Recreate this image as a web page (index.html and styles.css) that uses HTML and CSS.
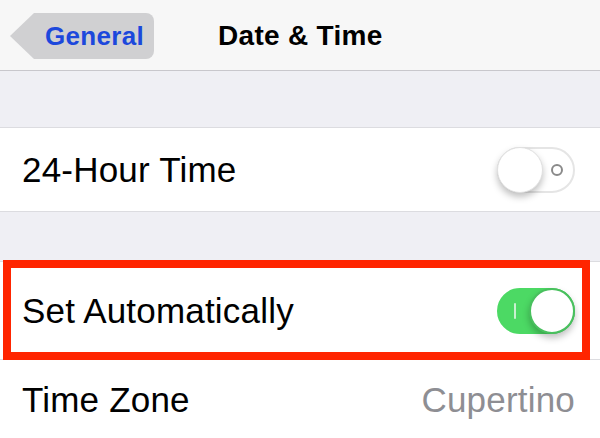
FILE: index.html
```html
<!DOCTYPE html>
<html lang="en">
<head>
  <meta charset="UTF-8">
  <meta name="viewport" content="width=device-width, initial-scale=1.0">
  <title>Date &amp; Time</title>
  <link rel="stylesheet" href="styles.css">
</head>
<body>
  <div class="nav">
    <div class="back">
      <span class="back-label">General</span>
    </div>
    <div class="nav-title">Date &amp; Time</div>
  </div>

  <div class="gap gap-first"></div>

  <div class="row">
    <span class="label">24-Hour Time</span>
    <div class="switch">
      <span class="switch-mark"></span>
      <span class="knob"></span>
    </div>
  </div>

  <div class="gap"></div>

  <div class="row row-marked">
    <span class="label">Set Automatically</span>
    <div class="switch on">
      <span class="switch-mark"></span>
      <span class="knob"></span>
    </div>
  </div>

  <div class="row row-last">
    <span class="label">Time Zone</span>
    <span class="value">Cupertino</span>
  </div>
</body>
</html>
```

FILE: styles.css
```css
body {
  margin: 0;
  font-family: "Liberation Sans", Arial, sans-serif;
  background: #efeff4;
  color: #000;
  overflow: hidden;
}

.nav {
  height: 70px;
  display: flex;
  align-items: center;
  background: #f7f7f7;
  border-bottom: 1px solid #c8c7cc;
  padding-top: 2px;
  box-sizing: border-box;
  height: 71px;
}
.back {
  position: relative;
  margin-left: 34px;
  height: 46px;
  width: 120px;
  background: #d0d0d2;
  border-radius: 0 8px 8px 0;
  display: flex;
  align-items: center;
}
/* pointed tip on the left of the back button */
.back::before {
  content: "";
  position: absolute;
  left: -24px;
  top: 0;
  border-top: 23px solid transparent;
  border-bottom: 23px solid transparent;
  border-right: 24px solid #d0d0d2;
}
.back-label {
  margin-left: 11px;
  font-size: 26px;
  font-weight: bold;
  color: #1c48dc;
  letter-spacing: 0.3px;
}
.nav-title {
  margin-left: 64px;
  font-size: 28px;
  font-weight: bold;
  letter-spacing: 0.3px;
}

.gap {
  height: 49px;
  border-bottom: 1px solid #dcdce0;
}
.gap-first {
  height: 56px;
}

.row {
  position: relative;
  height: 83px;
  display: flex;
  align-items: center;
  justify-content: space-between;
  padding: 0 25px 0 22px;
  background: #fff;
  border-bottom: 1px solid #dcdce0;
}
.row-marked {
  height: 97px;
}
/* red highlight frame drawn over the row */
.row-marked::after {
  content: "";
  position: absolute;
  left: 3px;
  right: 10px;
  top: -2px;
  bottom: -1px;
  border: 8px solid #ff2500;
}
.row-last {
  height: 80px;
  border-bottom: none;
  padding-bottom: 4px;
}

.label {
  font-size: 35px;
  letter-spacing: 0.2px;
}
.value {
  font-size: 35px;
  color: #8e8e93;
  letter-spacing: 0.2px;
}

.switch {
  position: relative;
  width: 78px;
  height: 46px;
  box-sizing: border-box;
  border-radius: 23px;
  border: 2px solid #e5e5e5;
  background: #fff;
}
.switch .knob {
  position: absolute;
  left: -2px;
  top: -2px;
  width: 46px;
  height: 46px;
  box-sizing: border-box;
  border-radius: 50%;
  background: #fff;
  border: 1px solid #e0e0e0;
  box-shadow: 0 4px 7px rgba(0, 0, 0, 0.25);
}
.switch .switch-mark {
  position: absolute;
  right: 10px;
  top: 15px;
  width: 12px;
  height: 12px;
  box-sizing: border-box;
  border-radius: 50%;
  border: 2px solid #8a8a8a;
}
.switch.on {
  background: #4cd964;
  border-color: #4cd964;
}
.switch.on .knob {
  left: auto;
  right: -2px;
  border: 2px solid #49c05e;
}
.switch.on .switch-mark {
  right: auto;
  left: 15px;
  top: 13px;
  width: 2px;
  height: 16px;
  border: none;
  border-radius: 1px;
  background: #c8f0cf;
}
```
